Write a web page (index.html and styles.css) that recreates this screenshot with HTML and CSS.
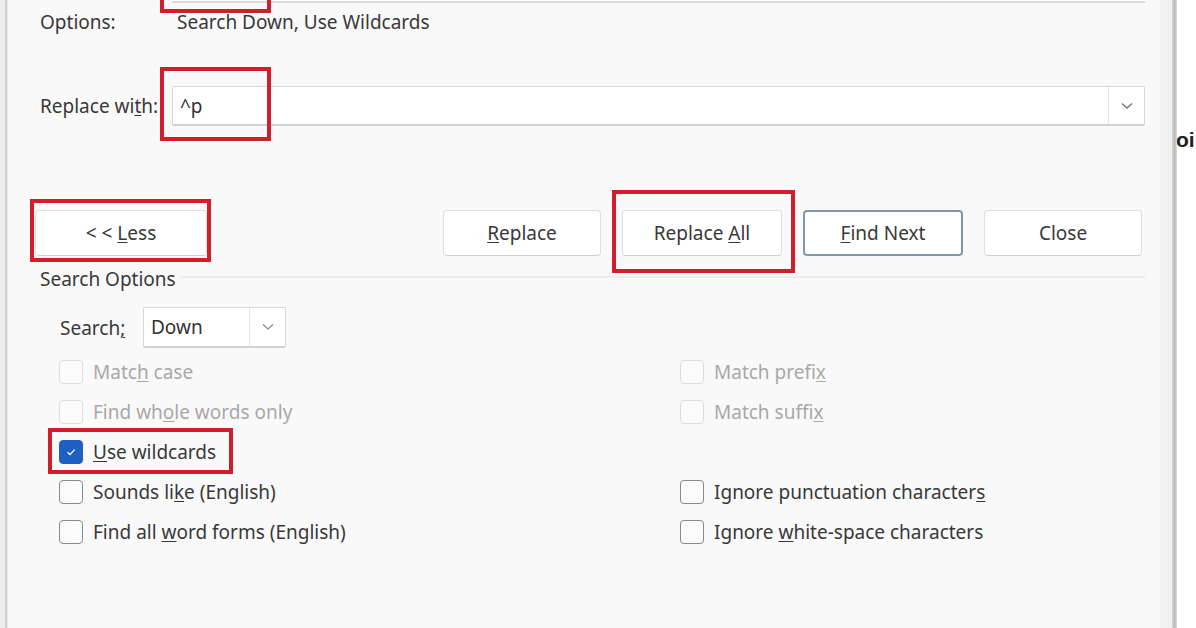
FILE: index.html
```html
<!DOCTYPE html>
<html lang="en">
<head>
<meta charset="utf-8">
<title>Find and Replace</title>
<link rel="stylesheet" href="styles.css">
</head>
<body>
<div class="screen">
  <div class="edge-left"></div>
  <div class="dialog">
    <div class="find-row"><div class="find-input"></div></div>

    <div class="options-row">
      <span class="label">Options:</span>
      <span class="value">Search Down, Use Wildcards</span>
    </div>

    <div class="replace-row">
      <span class="label">Replace wi<u>t</u>h:</span>
      <div class="combo combo-wide">
        <span class="combo-text">^p</span>
        <span class="combo-arrow">
          <svg viewBox="0 0 12 8" width="12" height="8"><path d="M1 1.5 L6 6 L11 1.5" fill="none" stroke="#777" stroke-width="1.4"/></svg>
        </span>
      </div>
    </div>

    <div class="buttons">
      <button class="btn btn-less">&lt; &lt; <u>L</u>ess</button>
      <div class="btn-group">
        <button class="btn"><u>R</u>eplace</button>
        <button class="btn btn-wide">Replace <u>A</u>ll</button>
        <button class="btn btn-wide btn-default"><u>F</u>ind Next</button>
        <button class="btn">Close</button>
      </div>
    </div>

    <div class="group-title">
      <span>Search Options</span>
      <span class="group-line"></span>
    </div>

    <div class="search-row">
      <span class="label">Search<u>;</u></span>
      <div class="combo combo-small">
        <span class="combo-text">Down</span>
        <span class="combo-arrow">
          <svg viewBox="0 0 12 8" width="12" height="8"><path d="M1 1.5 L6 6 L11 1.5" fill="none" stroke="#888" stroke-width="1.3"/></svg>
        </span>
      </div>
    </div>

    <div class="checks">
      <div class="check disabled"><span class="box"></span><span>Matc<u>h</u> case</span></div>
      <div class="check disabled"><span class="box"></span><span>Match prefi<u>x</u></span></div>
      <div class="check disabled"><span class="box"></span><span>Find wh<u>o</u>le words only</span></div>
      <div class="check disabled"><span class="box"></span><span>Match suffi<u>x</u></span></div>
      <div class="check"><span class="box checked">
        <svg viewBox="0 0 12 12" width="12" height="12"><path d="M2.5 6.2 L5 8.6 L9.6 3.6" fill="none" stroke="#fff" stroke-width="1.4"/></svg>
      </span><span><u>U</u>se wildcards</span></div>
      <div class="check empty"></div>
      <div class="check"><span class="box"></span><span>Sounds li<u>k</u>e (English)</span></div>
      <div class="check"><span class="box"></span><span>Ignore punctuation character<u>s</u></span></div>
      <div class="check"><span class="box"></span><span>Find all <u>w</u>ord forms (English)</span></div>
      <div class="check"><span class="box"></span><span>Ignore <u>w</u>hite-space characters</span></div>
    </div>

    <div class="mark mark-find"></div>
    <div class="mark mark-replace"></div>
    <div class="mark mark-less"></div>
    <div class="mark mark-all"></div>
    <div class="mark mark-wild"></div>
  </div>
  <div class="edge-right">
    <div class="edge-shade"></div>
    <div class="edge-line"></div>
    <div class="doc"><span class="oi">oi</span></div>
  </div>
</div>
</body>
</html>
```

FILE: styles.css
```css
* { box-sizing: border-box; }
html, body { margin: 0; padding: 0; }
body {
  width: 1196px;
  height: 628px;
  overflow: hidden;
  background: #ffffff;
  font-family: "Noto Sans", "Open Sans", sans-serif;
  font-size: 19px;
  color: #383838;
}
u { text-decoration-thickness: 1px; text-underline-offset: 2px; }

.screen { display: flex; height: 628px; }

.edge-left {
  width: 8px;
  background: linear-gradient(to right, #ececec 0 5px, #cfcfcf 5px 7px, #e9e9e9 7px 8px);
}

.dialog {
  position: relative;
  width: 1152px;
  background: #f9f9f9;
  padding: 0 15px 0 32px;
}

.find-row { height: 3px; padding-left: 132px; }
.find-input { height: 3px; border-bottom: 2px solid #dcdcdc; background: #fff; }

.options-row {
  display: flex;
  align-items: center;
  height: 24px;
  margin-top: 7px;
}
.options-row .label { width: 137px; }

.replace-row {
  display: flex;
  align-items: center;
  height: 40px;
  margin-top: 52px;
}
.replace-row .label { width: 132px; white-space: nowrap; }

.combo {
  display: flex;
  align-items: stretch;
  background: #ffffff;
  border: 1px solid #d7d7d7;
  border-bottom: 2px solid #d2d2d2;
  border-radius: 2px;
  height: 100%;
}
.combo-wide { flex: 1; }
.combo-text { flex: 1; display: flex; align-items: center; padding-left: 7px; color: #333; }
.combo-arrow {
  width: 36px;
  display: flex;
  align-items: center;
  justify-content: center;
  border-left: 1px solid #e4e4e4;
}

.buttons {
  display: flex;
  align-items: center;
  height: 46px;
  margin-top: 84px;
  margin-left: -5px;
}
.btn {
  font: inherit;
  color: #383838;
  background: #ffffff;
  border: 1px solid #dedede;
  border-bottom-color: #d0d0d0;
  border-radius: 4px;
  height: 46px;
  width: 158px;
  padding: 0;
}
.btn-wide { width: 160px; }
.btn-less { width: 172px; }
.btn-group { display: flex; gap: 21px; margin-left: auto; margin-right: 3px; }
.btn-default { border: 2px solid #7d97ad; }

.group-title {
  display: flex;
  align-items: center;
  height: 20px;
  margin-top: 13px;
}
.group-line { flex: 1; height: 2px; background: #ececec; margin-left: 4px; margin-top: -4px; }

.search-row {
  display: flex;
  align-items: center;
  height: 41px;
  margin-top: 18px;
  padding-left: 20px;
}
.search-row .label { width: 83px; }
.combo-small { width: 143px; }
.combo-small .combo-arrow { width: 36px; }

.checks {
  display: grid;
  grid-template-columns: 621px 1fr;
  grid-auto-rows: 40px;
  margin-top: 4px;
  padding-left: 19px;
}
.check { display: flex; align-items: center; gap: 10px; }
.check .box {
  width: 24px;
  height: 24px;
  border: 1.5px solid #8a8a8a;
  border-radius: 4px;
  background: #fbfbfb;
  display: flex;
  align-items: center;
  justify-content: center;
}
.check.disabled { color: #a8a8a8; }
.check.disabled .box { border-color: #dddddd; }
.check .box.checked { background: #1f5fbf; border-color: #1f5fbf; }

.mark {
  position: absolute;
  border: 4px solid #d01f2b;
}
.mark-find { left: 152px; top: -14px; width: 111px; height: 27px; }
.mark-replace { left: 152px; top: 67px; width: 111px; height: 74px; }
.mark-less { left: 22px; top: 199px; width: 181px; height: 63px; }
.mark-all { left: 604px; top: 190px; width: 183px; height: 83px; }
.mark-wild { left: 40px; top: 428px; width: 185px; height: 46px; }

.edge-right {
  flex: 1;
  display: flex;
}
.edge-shade { width: 12px; background: #f1f1f1; }
.edge-line { width: 5px; background: linear-gradient(to right, #d9d9d9, #b9b9b9, #dedede); }
.doc {
  flex: 1;
  background: #ffffff;
  padding-top: 127px;
  overflow: hidden;
}
.oi {
  font-family: "Liberation Sans", sans-serif;
  font-size: 21px;
  font-weight: bold;
  color: #222;
  margin-left: -1px;
  white-space: nowrap;
}
```
